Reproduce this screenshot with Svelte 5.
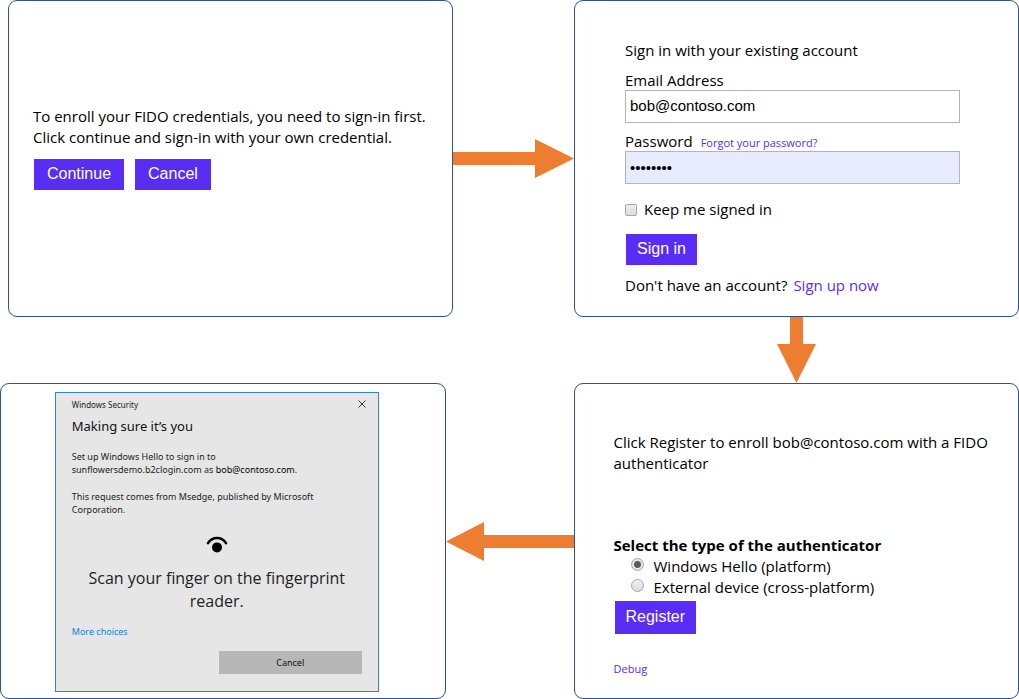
<script>
  let email = $state('bob@contoso.com');
  let password = $state('password');
  let keep = $state(false);
  let authenticator = $state('platform');
</script>

<main>
  <div class="row first">
    <section class="card enroll">
      <p>To enroll your FIDO credentials, you need to sign-in first.<br />Click continue and sign-in with your own credential.</p>
      <div class="actions">
        <button class="primary roomy">Continue</button>
        <button class="primary roomy">Cancel</button>
      </div>
    </section>

    <svg class="arrow right" viewBox="0 0 121 40" aria-hidden="true">
      <path d="M0 13H82V0L121 19.5L82 39V26H0Z" />
    </svg>

    <section class="card signin">
      <p class="intro">Sign in with your existing account</p>
      <label for="email">Email Address</label>
      <input class="field" id="email" type="text" bind:value={email} />
      <div class="labels">
        <label for="password">Password</label>
        <a class="small" href="#forgot">Forgot your password?</a>
      </div>
      <input class="field filled" id="password" type="password" bind:value={password} />
      <div class="keep">
        <input id="keep" type="checkbox" bind:checked={keep} />
        <label for="keep">Keep me signed in</label>
      </div>
      <button class="primary">Sign in</button>
      <p class="signup"><span>Don't have an account?</span><a href="#signup">Sign up now</a></p>
    </section>
  </div>

  <div class="row between">
    <svg class="arrow down" viewBox="0 0 40 66" aria-hidden="true">
      <path d="M13 0H26V27H39L19.5 66L0 27H13Z" />
    </svg>
  </div>

  <div class="row second">
    <section class="card hello">
      <div class="dialog">
        <header>
          <span>Windows Security</span>
          <button class="close" aria-label="Close">
            <svg viewBox="0 0 8 8" aria-hidden="true"><path d="M0.5 0.5L7.5 7.5M7.5 0.5L0.5 7.5" /></svg>
          </button>
        </header>
        <h2>Making sure it’s you</h2>
        <p>Set up Windows Hello to sign in to<br />sunflowersdemo.b2clogin.com as <span class="user">bob@contoso.com</span>.</p>
        <p>This request comes from Msedge, published by Microsoft<br />Corporation.</p>
        <svg class="eye" viewBox="0 0 22 17" aria-hidden="true">
          <path d="M2 7.2C6.2 0.2 15.8 0.2 20 7.2" />
          <circle cx="11" cy="11.4" r="5" />
        </svg>
        <p class="scan">Scan your finger on the fingerprint<br />reader.</p>
        <a class="more" href="#more">More choices</a>
        <button class="cancel">Cancel</button>
      </div>
    </section>

    <svg class="arrow left" viewBox="0 0 128 40" aria-hidden="true">
      <path d="M128 14H38V1L0 20.5L38 40V27H128Z" />
    </svg>

    <section class="card register">
      <p>Click Register to enroll bob@contoso.com with a FIDO<br />authenticator</p>
      <fieldset>
        <legend>Select the type of the authenticator</legend>
        <div class="option">
          <input id="platform" type="radio" name="type" value="platform" bind:group={authenticator} />
          <label for="platform">Windows Hello (platform)</label>
        </div>
        <div class="option">
          <input id="cross" type="radio" name="type" value="cross" bind:group={authenticator} />
          <label for="cross">External device (cross-platform)</label>
        </div>
      </fieldset>
      <button class="primary tall">Register</button>
      <a class="small debug" href="#debug">Debug</a>
    </section>
  </div>
</main>

<style>
  :global(body) {
    margin: 0;
    background: #fff;
  }

  main {
    font: 15px/21px 'Open Sans', 'Noto Sans', sans-serif;
    color: #000;
  }

  p, h2 {
    margin: 0;
    white-space: nowrap;
  }

  a {
    color: #592df4;
    text-decoration: none;
  }

  .small {
    font-size: 11px;
  }

  .row {
    display: grid;
    grid-template-columns: 1fr 121px 1fr;
  }

  .first, .between {
    padding-left: 8px;
  }

  .second {
    grid-template-columns: 1fr 128px 1fr;
  }

  .card {
    box-sizing: border-box;
    min-width: 0;
    min-height: 316px;
    border: 1px solid #2f528f;
    border-radius: 9px;
    display: flex;
    flex-direction: column;
    align-items: flex-start;
  }

  .first .card {
    min-height: 317px;
  }

  .arrow {
    display: block;
    fill: #ed7d31;
  }

  .right {
    width: 121px;
    height: 40px;
    align-self: center;
  }

  .left {
    width: 128px;
    height: 40px;
    align-self: center;
  }

  .down {
    width: 40px;
    height: 66px;
    grid-column: 3;
    justify-self: center;
  }

  .primary {
    height: 31px;
    margin: 0 1px;
    padding: 0 11px 2px;
    border: 0;
    background: #592df4;
    color: #fff;
    font: 16px/20px 'Liberation Sans', Arial, sans-serif;
  }

  .roomy {
    padding: 0 13px 2px;
  }

  .tall {
    height: 33px;
  }

  .enroll {
    padding: 105px 24px 0;
  }

  .actions {
    display: flex;
    gap: 9px;
    padding-top: 11px;
  }

  .signin {
    padding: 39px 58px 0 50px;
  }

  .intro {
    padding-bottom: 9px;
  }

  .signin > label {
    line-height: 20px;
  }

  .field {
    box-sizing: border-box;
    width: 100%;
    height: 33px;
    padding: 0 4px 2px;
    border: 1px solid #b4b4b4;
    border-radius: 0;
    background: #fff;
    color: #000;
    font: 15px/20px 'Liberation Sans', Arial, sans-serif;
  }

  .filled {
    padding-bottom: 0;
    background: #e8ebfe;
  }

  .labels {
    display: flex;
    align-items: baseline;
    gap: 8px;
    height: 19px;
    padding-top: 9px;
    line-height: 18px;
  }

  .keep {
    display: flex;
    align-items: center;
    gap: 7px;
    padding: 15px 0 14px;
  }

  input[type='checkbox'], input[type='radio'] {
    appearance: none;
    box-sizing: border-box;
    margin: 0;
    width: 12px;
    height: 12px;
    border: 1px solid #a6a6a6;
    border-radius: 2px;
    background: linear-gradient(#eee, #dcdcdc);
  }

  input[type='radio'] {
    width: 13px;
    height: 13px;
    border-radius: 50%;
  }

  input[type='radio']:checked {
    background: radial-gradient(circle, #5a5a5a 3px, #e6e6e6 4px);
  }

  .signup {
    display: flex;
    gap: 6px;
    padding-top: 10px;
  }

  .register {
    padding: 48px 24px 0 39px;
  }

  fieldset {
    margin: 0;
    padding: 61px 0 3px;
    border: 0;
  }

  legend {
    float: left;
    padding: 0;
    font-weight: 700;
  }

  .option {
    clear: both;
    display: flex;
    gap: 10px;
    padding-left: 17px;
  }

  .option input {
    margin-top: 2px;
  }

  .debug {
    padding-top: 24px;
  }

  .hello {
    align-items: center;
    padding: 8px 0 6px;
  }

  .dialog {
    box-sizing: border-box;
    width: 324px;
    min-height: 300px;
    margin-right: 12px;
    padding: 4px 16px 16px;
    border: 1px solid #2b88d8;
    background: #e6e6e6;
    color: #222;
    font-family: 'Noto Sans', 'Open Sans', sans-serif;
    font-size: 9px;
    line-height: 13px;
    display: flex;
    flex-direction: column;
    align-items: flex-start;
  }

  header {
    align-self: stretch;
    display: flex;
    justify-content: space-between;
    align-items: center;
    height: 14px;
    font-size: 8px;
  }

  .close {
    padding: 0;
    border: 0;
    background: none;
    display: flex;
    margin-right: -4px;
  }

  .close svg {
    width: 8px;
    height: 8px;
    stroke: #333;
    fill: none;
  }

  h2 {
    padding: 6px 0 15px;
    font-size: 13px;
    line-height: 18px;
    font-weight: 400;
    color: #111;
  }

  .dialog p {
    padding: 0 0 14px;
  }

  .user {
    color: #000;
  }

  .eye {
    align-self: center;
    width: 22px;
    height: 17px;
    margin-top: 6px;
  }

  .eye path {
    fill: none;
    stroke: #000;
    stroke-width: 2.6;
    stroke-linecap: round;
  }

  .dialog .scan {
    align-self: center;
    padding: 14px 0 12px;
    font-family: 'Open Sans', 'Noto Sans', sans-serif;
    font-size: 16px;
    line-height: 23px;
    text-align: center;
  }

  .more {
    color: #1a7fd4;
  }

  .cancel {
    align-self: flex-end;
    width: 143px;
    height: 23px;
    margin-top: 13px;
    padding: 0;
    border: 0;
    background: #b7b7b7;
    color: #111;
    font: 9px/13px 'Noto Sans', 'Open Sans', sans-serif;
  }
</style>
